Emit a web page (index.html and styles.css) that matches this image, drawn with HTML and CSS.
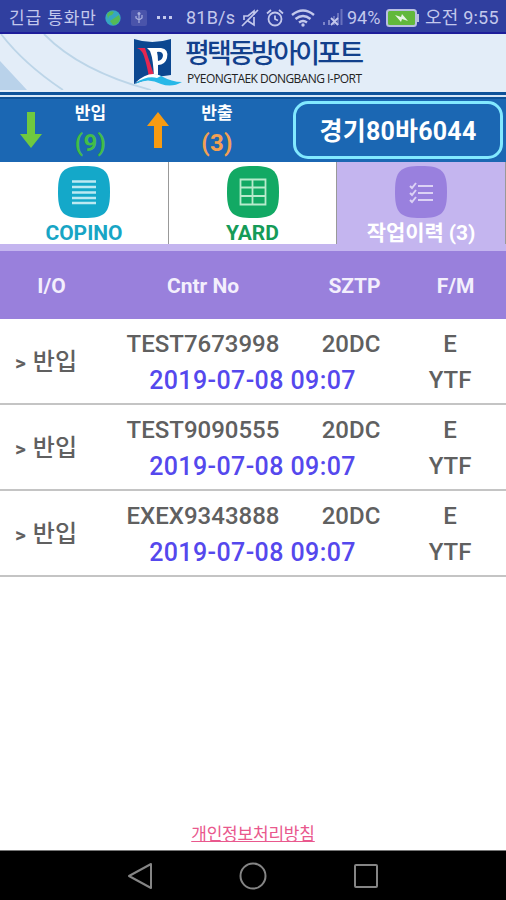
FILE: index.html
```html
<!DOCTYPE html>
<html lang="ko">
<head>
  <meta charset="UTF-8">
  <meta name="viewport" content="width=device-width, initial-scale=1.0">
  <title>평택동방아이포트</title>
  <link rel="stylesheet" href="styles.css">
</head>
<body>

  <div class="status-bar">
    <span class="carrier">긴급 통화만</span>
    <svg class="globe" width="16" height="16" viewBox="0 0 16 16">
      <circle cx="8" cy="8" r="7.7" fill="#36a6c2"/>
      <path d="M2 4 Q5 0 9 2 L7 5 L4 6 L3 9 Z M8 9 L14 5 L15 9 Q13 15 8 15 L5 11 Z" fill="#55bb55"/>
    </svg>
    <svg class="usb" width="16" height="16" viewBox="0 0 16 16">
      <rect width="16" height="16" rx="2" fill="#4a54aa"/>
      <path d="M8 3v10M5 6v2l3 2 3-2V5" fill="none" stroke="#a9b0de" stroke-width="1.2"/>
      <circle cx="8" cy="3.5" r="1.5" fill="#a9b0de"/>
    </svg>
    <span class="dots"><i></i><i></i><i></i></span>
    <span class="speed">81B/s</span>
    <svg class="mute" width="20" height="20" viewBox="0 0 20 20" fill="none" stroke="#c3c8ec" stroke-width="1.7">
      <path d="M2 18 18 2M4 12V8h4l6-5v4M8 13l6 4V9"/>
    </svg>
    <svg class="alarm" width="18" height="18" viewBox="0 0 18 18" fill="none" stroke="#c3c8ec" stroke-width="1.8">
      <circle cx="9" cy="10" r="6.5"/>
      <path d="M9 6.5V10l3 1.5M1 4.5 5 1M17 4.5 13 1"/>
    </svg>
    <svg class="wifi" width="24" height="18" viewBox="0 0 24 18" fill="none" stroke="#c3c8ec" stroke-width="2.4">
      <path d="M1 6Q12-3 23 6M4.5 10Q12 4 19.500 10M8 13.500Q12 10.500 16 13.500"/>
      <circle cx="12" cy="16" r="1.700" fill="#c3c8ec" stroke="none"/>
    </svg>
    <svg class="signal" width="21" height="17" viewBox="0 0 21 17">
      <path d="M1 13h2v3H1zM6 11h2v5H6z" fill="#7d85c8"/>
      <path d="M11 7h2v9h-2zM15 4h2v12h-2zM18.500 0h2v16h-2z" fill="#6972bd"/>
      <path d="m9 9 7 7M16 9l-7 7" stroke="#c3c8ec" stroke-width="1.800"/>
    </svg>
    <span class="percent">94%</span>
    <svg class="battery" width="33" height="18" viewBox="0 0 33 18">
      <rect x="1" y="1" width="29" height="16" rx="2.500" fill="#62b83c" stroke="#b9bfe2" stroke-width="2"/>
      <path d="M31 5h2v8h-2z" fill="#b9bfe2"/>
      <path d="m9 6 6 2 1-3 6 7-6-2-1 3z" fill="#e8f4e4"/>
    </svg>
    <span class="clock">오전 9:55</span>
  </div>

  <div class="banner">
    <svg class="banner-lines" width="160" height="56" viewBox="0 0 160 56" fill="none">
      <path d="M0 27 27 56H0z" fill="#b9d2ea"/>
      <path d="M1 0Q24 30 63 56M44 0Q80 37 151 56" stroke="#bcd5e8" stroke-width="1.800"/>
    </svg>
    <svg class="logo" width="50" height="47" viewBox="0 0 50 47">
      <path d="M1 0Q19 6 38 0V36Q20 38 1 45z" fill="#0c4790"/>
      <path d="M4 9H12L21 36 16 38Q12 17 9 13Q7 10 4 9z" fill="#e42750"/>
      <path d="M14 9H28Q36 10 34 19Q32 26 25 26V37L21 38Q20 20 18 15Q17 11 14 9zM24 13Q25 17 25 22Q30 21 30 16Q29 12 24 13z" fill="#fff" fill-rule="evenodd"/>
      <path d="M2 45Q17 32 28 37Q39 43 49 43Q39 49 28 45Q15 38 2 45z" fill="#27b8e8"/>
      <path d="M2 44Q16 31 28 37L24 39Q15 36 2 44z" fill="#fff"/>
    </svg>
    <div class="brand">
      <div class="brand-ko">평택동방아이포트</div>
      <div class="brand-en">PYEONGTAEK DONGBANG I-PORT</div>
    </div>
  </div>

  <div class="summary">
    <svg class="arrow" width="22" height="36" viewBox="0 0 22 36"><path d="M7 0h8v22h7L11 36 0 22h7z" fill="#6fc93f"/></svg>
    <div class="count count-in"><div class="label">반입</div><div class="number">(9)</div></div>
    <svg class="arrow" width="22" height="36" viewBox="0 0 22 36"><path d="M7 36h8V14h7L11 0 0 14h7z" fill="#f79b12"/></svg>
    <div class="count count-out"><div class="label">반출</div><div class="number">(3)</div></div>
    <div class="plate">경기80바6044</div>
  </div>

  <div class="tabs">
    <div class="tab copino">
      <svg width="52" height="52" viewBox="0 0 52 52">
        <path class="tile" d="M0 26C0 5 5 0 26 0S52 5 52 26 47 52 26 52 0 47 0 26z"/>
        <path d="M14 15.500h24M14 21h24M14 26.500h24M14 32h24M14 37h24" stroke="#bce9f2" stroke-width="2.600"/>
      </svg>
      <div class="tab-name">COPINO</div>
    </div>
    <div class="tab yard">
      <svg width="52" height="52" viewBox="0 0 52 52">
        <path class="tile" d="M0 26C0 5 5 0 26 0S52 5 52 26 47 52 26 52 0 47 0 26z"/>
        <path d="M13.500 13.500h25v25h-25zM13.500 21.500h25M13.500 30h25M25.500 13.500v25" fill="none" stroke="#b7ebcc" stroke-width="1.800"/>
      </svg>
      <div class="tab-name">YARD</div>
    </div>
    <div class="tab history">
      <svg width="52" height="52" viewBox="0 0 52 52">
        <path class="tile" d="M0 26C0 5 5 0 26 0S52 5 52 26 47 52 26 52 0 47 0 26z"/>
        <path d="M23 20h15M23 27h15M23 34h15M15 20l2 2 4-5M15 27l2 2 4-5M15 34l2 2 4-5" fill="none" stroke="#dcd2f5" stroke-width="2"/>
      </svg>
      <div class="tab-name">작업이력 (3)</div>
    </div>
  </div>

  <div class="list-head">
    <div>I/O</div>
    <div>Cntr No</div>
    <div>SZTP</div>
    <div>F/M</div>
  </div>

  <div class="list">
    <div class="row">
      <div class="io"><span>&gt;</span> 반입</div>
      <div>TEST7673998</div>
      <div>20DC</div>
      <div>E</div>
      <div class="date">2019-07-08 09:07</div>
      <div>YTF</div>
    </div>
    <div class="row">
      <div class="io"><span>&gt;</span> 반입</div>
      <div>TEST9090555</div>
      <div>20DC</div>
      <div>E</div>
      <div class="date">2019-07-08 09:07</div>
      <div>YTF</div>
    </div>
    <div class="row">
      <div class="io"><span>&gt;</span> 반입</div>
      <div>EXEX9343888</div>
      <div>20DC</div>
      <div>E</div>
      <div class="date">2019-07-08 09:07</div>
      <div>YTF</div>
    </div>
  </div>

  <div class="footer">
    <a class="privacy" href="#">개인정보처리방침</a>
  </div>

  <div class="nav-bar">
    <svg width="26" height="28" viewBox="0 0 26 28"><path d="M24 2V26L2 14z"/></svg>
    <svg width="28" height="28" viewBox="0 0 28 28"><circle cx="14" cy="14" r="12.500"/></svg>
    <svg width="26" height="26" viewBox="0 0 26 26"><rect x="2" y="2" width="22" height="22" rx="1"/></svg>
  </div>

</body>
</html>
```

FILE: styles.css
```css
* {
  box-sizing: border-box;
}

body {
  margin: 0;
  height: 900px;
  display: flex;
  flex-direction: column;
  font-family: Roboto, "Noto Sans CJK KR", sans-serif;
  background: #fff;
  overflow: hidden;
}

svg {
  display: block;
  flex: none;
}

/* Android status bar */
.status-bar {
  flex: none;
  height: 34px;
  display: flex;
  align-items: center;
  padding: 3px 0 0 9px;
  background: #303f9f;
  border-bottom: 2px solid #1d1d9a;
  color: #c3c8ec;
  font-size: 18px;
  line-height: 32px;
  white-space: nowrap;
}

.carrier {
  width: 95px;
  font-size: 17px;
  letter-spacing: 0.9px;
}

.usb {
  margin-left: 10px;
}

.globe {
  margin-left: 1px;
}

.dots {
  display: flex;
  gap: 3px;
  margin-left: 10px;
  width: 29px;
}

.dots i {
  width: 3px;
  height: 3px;
  background: #c3c8ec;
}

.speed {
  width: 53px;
  letter-spacing: 0.2px;
}

.mute {
  margin-left: 1px;
}

.alarm {
  margin-left: 6px;
}

.wifi {
  margin-left: 7px;
}

.signal {
  margin-left: 7px;
}

.percent {
  margin-left: 4px;
  width: 39px;
}

.clock {
  margin-left: 6px;
  letter-spacing: 0.2px;
}

/* Company banner */
.banner {
  flex: none;
  height: 56px;
  display: flex;
  position: relative;
  padding: 5px 0 0 133px;
  background: #e3edf8;
}

.banner-lines {
  position: absolute;
  left: 0;
  top: 0;
}

.logo {
  position: relative;
}

.brand {
  margin-left: 2px;
  white-space: nowrap;
}

.brand-ko {
  height: 30px;
  font-size: 27px;
  line-height: 31px;
  font-weight: 500;
  letter-spacing: -2.8px;
  color: #12408c;
}

.brand-en {
  padding-left: 2px;
  font-family: "Open Sans", sans-serif;
  font-size: 12px;
  line-height: 19px;
  letter-spacing: -0.55px;
  color: #222;
}

/* In / out counts */
.summary {
  flex: none;
  height: 72px;
  display: flex;
  align-items: center;
  padding: 8px 3px 0 20px;
  background: linear-gradient(#e3edf8 0 2px, #0c5199 2px 5px, #d5e6f7 5px 7px, #0c5199 7px 9px, #1b67b3 9px);
}

.count {
  width: 105px;
  padding-right: 8px;
  text-align: center;
  font-weight: 700;
}

.count-out {
  width: 98px;
  padding-right: 2px;
}

.label {
  font-size: 17px;
  line-height: 26px;
  color: #fff;
}

.number {
  font-size: 24px;
  line-height: 34px;
  letter-spacing: 0.3px;
}

.count-in .number {
  color: #43bd48;
}

.count-out .number {
  color: #f3a052;
}

.plate {
  margin-left: auto;
  width: 210px;
  height: 58px;
  border: 3px solid #82e9ff;
  border-radius: 15px;
  color: #fff;
  font-size: 25px;
  font-weight: 700;
  line-height: 56px;
  letter-spacing: 0.2px;
  text-align: center;
}

/* Tabs */
.tabs {
  flex: none;
  height: 89px;
  display: grid;
  grid-template-columns: 169px 168px 169px;
  grid-template-rows: 82px;
  background: #c4b5ef;
}

.tab {
  display: flex;
  flex-direction: column;
  align-items: center;
  padding-top: 4px;
  background: #fff;
  border-right: 1px solid #999;
}

.tab-name {
  height: 26px;
  font-size: 21px;
  font-weight: 700;
  line-height: 31px;
  white-space: nowrap;
}

.copino {
  color: #18a5c5;
}

.copino .tile {
  fill: #14a8c9;
}

.yard {
  color: #159b58;
}

.yard .tile {
  fill: #12a964;
}

.history {
  background: #c4b5ef;
  color: #fff;
}

.history .tab-name {
  letter-spacing: -0.1px;
}

.history .tile {
  fill: #9980de;
}

/* List header */
.list-head {
  flex: none;
  height: 68px;
  display: grid;
  grid-template-columns: 20% 40% 20% 20%;
  align-items: center;
  padding: 1px 0 0 1px;
  background: #9980dc;
  color: #f3effc;
  font-size: 21px;
  font-weight: 700;
  text-align: center;
}

/* List rows */
.row {
  height: 86px;
  display: grid;
  grid-template-columns: 102px 202px 94px 104px;
  grid-template-rows: 36px 36px;
  padding-top: 7px;
  border-bottom: 2px solid #c4c4c4;
  color: #606060;
  font-size: 24px;
  font-weight: 500;
  line-height: 37px;
  text-align: center;
}

.io {
  grid-row: span 2;
  padding-left: 15px;
  line-height: 72px;
  text-align: left;
  white-space: nowrap;
}

.io span {
  font-size: 21px;
  font-weight: 700;
  margin-right: 1px;
}

.date {
  grid-column: 2 / 4;
  padding-left: 5px;
  color: #5548ed;
  font-size: 25px;
  letter-spacing: 0.4px;
}

.footer {
  margin-top: auto;
  padding-bottom: 4px;
  text-align: center;
}

.privacy {
  font-size: 17px;
  line-height: 24px;
  letter-spacing: -0.2px;
  color: #e9588d;
}

/* Android navigation */
.nav-bar {
  flex: none;
  height: 50px;
  display: flex;
  justify-content: center;
  align-items: center;
  gap: 86px;
  background: #000;
  border-top: 1px solid #777;
}

.nav-bar svg {
  fill: none;
  stroke: #858585;
  stroke-width: 2;
  stroke-linejoin: round;
}
```
